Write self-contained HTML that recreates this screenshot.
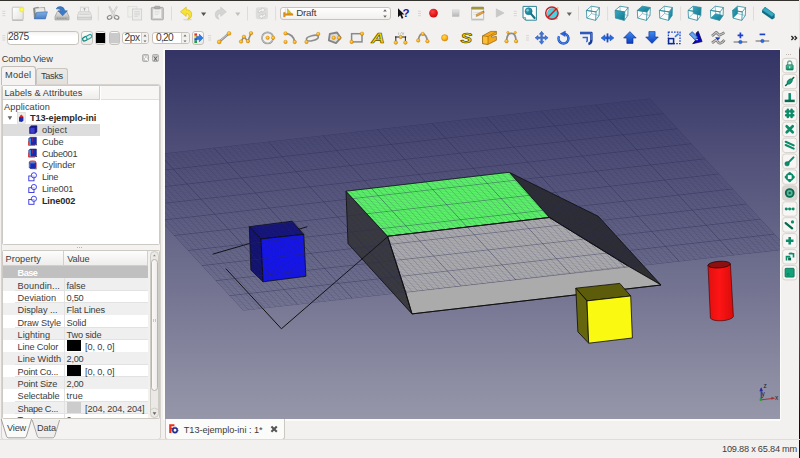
<!DOCTYPE html><html><head><meta charset="utf-8"><title>FreeCAD</title><style>

html,body{margin:0;padding:0}
body{width:800px;height:458px;overflow:hidden;background:#f2f1f0;font-family:"Liberation Sans",sans-serif}
#root{position:absolute;left:0;top:0;width:800px;height:458px;overflow:hidden;background:#f2f1f0}
#root div,#root i{position:absolute;box-sizing:border-box}
.topline{left:0;top:0;width:798.8px;height:1.1px;background:#33322e}
.t{position:absolute;white-space:pre;line-height:1;transform-origin:0 50%}
.tbtn{width:7.1px;height:7.5px;border:0.7px solid #b2b0ad;border-radius:1.8px;background:#c9c9c7}
.tab1{background:#f4f3f2;border:0.8px solid #c2beb7;border-bottom:none;border-radius:3px 3px 0 0}
.tab2{background:linear-gradient(#eceae7,#e3e0dc);border:0.8px solid #c9c5bf;border-bottom:none;border-radius:3px 3px 0 0}
.pane{border:0.8px solid #d6d3ce;border-radius:3px;background:#f4f3f2}
.wid{background:#fff;border:0.8px solid #cdc9c3;border-radius:1.5px}
.hdr{background:linear-gradient(#fdfdfd,#eeedeb);border-right:0.8px solid #d3d0cb;border-bottom:0.8px solid #d3d0cb}
.fld{border:0.8px solid #c6c2bc}
.btn{border:0.8px solid #c6c2bb;border-radius:3px;background:linear-gradient(#fbfbfa,#eceae7)}

</style></head><body><div id="root">
<div class="topline"></div>
<div style="position:absolute;left:798.8px;top:0;width:1.2px;height:458px;background:linear-gradient(#e4e4e4 0,#e4e4e4 46px,#34345e 50px,#4a4a5c 200px,#4c4c54 330px,#0c0c0c 430px,#0c0c0c 458px)"></div>
<div class="tbtn" style="left:141.8px;top:54.2px"><i style="left:0.9px;top:0.9px;width:1.6px;height:1.6px;background:#f4f4f4"></i><i style="left:2px;top:2.9px;width:1.8px;height:1.6px;background:#fafafa"></i><i style="left:3.9px;top:4px;width:1.7px;height:1.4px;background:#ededed"></i><i style="left:3.6px;top:1.2px;width:1.6px;height:1.2px;background:#dedede"></i></div>
<div class="tbtn" style="left:152.1px;top:54.2px"><svg width="7" height="7.4" style="position:absolute;left:-0.9px;top:-0.3px"><path d="M2 1.6L5 5.8M5 1.6L2 5.8" stroke="#555" stroke-width="0.9"/><path d="M1.3 2.4V5M5.7 2.4V5" stroke="#eee" stroke-width="0.7"/></svg></div>
<div class="tab2" style="left:36px;top:67.6px;width:31.5px;height:16.4px"></div>
<div class="pane" style="left:0.5px;top:83.6px;width:160.8px;height:356.2px"></div>
<div class="tab1" style="left:0.5px;top:66px;width:35.5px;height:18.6px"></div>
<div class="wid" style="left:2px;top:84.8px;width:157.5px;height:160.5px"></div>
<div class="hdr" style="left:3px;top:86.3px;width:96.5px;height:13.7px"></div>
<div style="position:absolute;left:100.5px;top:86.3px;width:58px;height:14px;background:#f7f6f5;border-bottom:1px solid #e2dfdb;box-sizing:border-box"></div>
<div style="position:absolute;left:3px;top:124.1px;width:96.5px;height:11.8px;background:#dddddd"></div>
<svg style="position:absolute;left:6px;top:114px" width="8" height="8"><path d="M1.6 2.2L6.2 2.2L3.9 6Z" fill="#666"/></svg>
<div style="position:absolute;left:77px;top:247px;width:6px;height:1px;background:repeating-linear-gradient(90deg,#b8b4ae 0 1px,transparent 1px 2px)"></div>
<div class="wid" style="left:2px;top:250px;width:157.5px;height:168.8px;background:#f2f1f0"></div>
<div style="position:absolute;left:3px;top:251px;width:145px;height:167px;background:#fff;overflow:hidden">
<div class="hdr" style="left:0;top:0;width:61px;height:15px"></div><div class="hdr" style="left:61px;top:0;width:84px;height:15px"></div>
<div style="position:absolute;left:0;top:15.2px;width:145px;height:12.2px;background:#c0c0c0"></div>
<div style="position:absolute;left:0;top:27.2px;width:145px;height:12.33px;background:#efefef"></div>
<div style="position:absolute;left:12px;top:38.8px;width:133px;height:0.9px;background:#e2e2e2"></div>
<div style="position:absolute;left:0;top:39.5px;width:145px;height:12.33px;background:#ffffff"></div>
<div style="position:absolute;left:12px;top:51.2px;width:133px;height:0.9px;background:#e2e2e2"></div>
<div style="position:absolute;left:0;top:51.9px;width:145px;height:12.33px;background:#efefef"></div>
<div style="position:absolute;left:12px;top:63.5px;width:133px;height:0.9px;background:#e2e2e2"></div>
<div style="position:absolute;left:0;top:64.2px;width:145px;height:12.33px;background:#ffffff"></div>
<div style="position:absolute;left:12px;top:75.8px;width:133px;height:0.9px;background:#e2e2e2"></div>
<div style="position:absolute;left:0;top:76.5px;width:145px;height:12.33px;background:#efefef"></div>
<div style="position:absolute;left:12px;top:88.1px;width:133px;height:0.9px;background:#e2e2e2"></div>
<div style="position:absolute;left:0;top:88.8px;width:145px;height:12.33px;background:#ffffff"></div>
<div style="position:absolute;left:12px;top:100.5px;width:133px;height:0.9px;background:#e2e2e2"></div>
<div style="position:absolute;left:63.5px;top:89.2px;width:14.5px;height:10.9px;background:#000"></div>
<div style="position:absolute;left:0;top:101.2px;width:145px;height:12.33px;background:#efefef"></div>
<div style="position:absolute;left:12px;top:112.8px;width:133px;height:0.9px;background:#e2e2e2"></div>
<div style="position:absolute;left:0;top:113.5px;width:145px;height:12.33px;background:#ffffff"></div>
<div style="position:absolute;left:12px;top:125.1px;width:133px;height:0.9px;background:#e2e2e2"></div>
<div style="position:absolute;left:63.5px;top:113.9px;width:14.5px;height:10.9px;background:#000"></div>
<div style="position:absolute;left:0;top:125.8px;width:145px;height:12.33px;background:#efefef"></div>
<div style="position:absolute;left:12px;top:137.5px;width:133px;height:0.9px;background:#e2e2e2"></div>
<div style="position:absolute;left:0;top:138.2px;width:145px;height:12.33px;background:#ffffff"></div>
<div style="position:absolute;left:12px;top:149.8px;width:133px;height:0.9px;background:#e2e2e2"></div>
<div style="position:absolute;left:0;top:150.5px;width:145px;height:12.33px;background:#efefef"></div>
<div style="position:absolute;left:12px;top:162.1px;width:133px;height:0.9px;background:#e2e2e2"></div>
<div style="position:absolute;left:63.5px;top:150.9px;width:14.5px;height:10.9px;background:#cccccc"></div>
<div style="position:absolute;left:0;top:162.8px;width:145px;height:12.33px;background:#ffffff"></div>
<div style="position:absolute;left:12px;top:174.5px;width:133px;height:0.9px;background:#e2e2e2"></div>
<div style="position:absolute;left:60.6px;top:27.2px;width:0.9px;height:140px;background:#e2e2e2"></div>
<span class="t" style="left:14.6px;top:165.3px;font-size:9.2px;color:#3c3c3c;letter-spacing:-0.2px">Tr...</span><span class="t" style="left:63.6px;top:165.3px;font-size:9.2px;color:#3c3c3c">0</span>
</div>
<div style="position:absolute;left:149.8px;top:250.8px;width:9px;height:167.6px;background:#ebe9e6;border:0.6px solid #cfcbc5;box-sizing:border-box;border-radius:4.5px"></div>
<div style="position:absolute;left:150.6px;top:258.6px;width:7.4px;height:132px;background:linear-gradient(90deg,#f9f9f8,#efedeb);border:0.8px solid #b9b5ae;box-sizing:border-box;border-radius:3.7px"></div>
<svg style="position:absolute;left:150px;top:251px" width="9" height="168"><path d="M3 5.2L4.4 3.4L5.8 5.2Z" fill="#8a8680"/><path d="M2.6 161.2L6.4 161.2L4.5 164Z" fill="#6a665f"/><path d="M1 158.5Q4.5 155.5 8 158.5" stroke="#c5c1bb" stroke-width="0.7" fill="none"/><rect x="3" y="68" width="0.8" height="3" fill="#bbb"/><rect x="5" y="68" width="0.8" height="3" fill="#bbb"/></svg>
<svg style="position:absolute;left:0;top:418px" width="165" height="23"><path d="M1.2 1L6.5 18.2Q7 19.8 8.6 19.8L24.2 19.8Q25.8 19.8 26.4 18.2L31.6 1" fill="#fafaf9" stroke="#7d7974" stroke-width="0.7"/><path d="M32.2 2L37.4 18.4Q38 19.8 39.6 19.8L52.4 19.8Q54 19.8 54.6 18.4L59.6 2" fill="#efeeec" stroke="#8a8680" stroke-width="0.7"/></svg>
<div style="position:absolute;left:163.4px;top:49px;width:618px;height:371.4px;background:#fbfbfa"></div>
<div style="position:absolute;left:164.6px;top:419.5px;width:615.6px;height:1px;background:#fbfbfa"></div>
<div style="position:absolute;left:164.6px;top:418.5px;width:120px;height:21px;background:#fbfbfa;border:0.8px solid #cbc7c1;border-top:none;box-sizing:border-box;border-radius:0 0 3px 3px"></div>
<svg style="position:absolute;left:168px;top:423px" width="12" height="12"><path d="M1.2 1.2L6.4 1.2L6.4 3.2L3.4 3.2L3.4 4.8L5.6 4.8L5.6 6.6L3.4 6.6L3.4 10L1.2 10Z" fill="#e8301c"/><circle cx="7" cy="7.2" r="2.2" fill="none" stroke="#1c2a8c" stroke-width="1.5"/><circle cx="7" cy="7.2" r="3.1" fill="none" stroke="#1c2a8c" stroke-width="0.8" stroke-dasharray="1.1 1"/></svg>
<svg style="position:absolute;left:269.5px;top:425.3px" width="9" height="9"><path d="M1.4 1.4L6.8 6.8M6.8 1.4L1.4 6.8" stroke="#555" stroke-width="2.1"/></svg>
<div style="position:absolute;left:0;top:439.4px;width:800px;height:0.8px;background:#e0ddd9"></div>
<div style="position:absolute;left:786px;top:53.5px;width:6px;height:1px;background:repeating-linear-gradient(90deg,#bbb7b1 0 1px,transparent 1px 2px)"></div>
<div class="fld" style="left:280.2px;top:6.5px;width:111px;height:13.4px;border-radius:3px;background:linear-gradient(#fff,#f1f0ee)"></div>
<div class="fld" style="left:7.2px;top:30.6px;width:72.3px;height:14.7px;border-radius:3.5px;background:linear-gradient(#f3f2f0,#fff 35%)"></div>
<div class="btn" style="left:81.4px;top:30.6px;width:11.2px;height:14.7px"></div>
<div class="btn" style="left:95px;top:30.6px;width:11.4px;height:14.7px"></div><div style="position:absolute;left:96.4px;top:33.2px;width:9px;height:9.4px;background:#000"></div>
<div class="btn" style="left:108.5px;top:30.6px;width:11.2px;height:14.7px"></div><div style="position:absolute;left:110px;top:33.2px;width:8.6px;height:9.4px;background:#cacaca"></div>
<div class="fld" style="left:122px;top:32.2px;width:26.8px;height:11.9px;border-radius:3px;background:#fff"></div><div style="position:absolute;left:141.3px;top:32.8px;width:7px;height:10.7px;background:#f2f1f0;border-left:0.7px solid #d4d0ca;border-radius:0 2.5px 2.5px 0"></div>
<div class="fld" style="left:152.3px;top:32.2px;width:37.7px;height:11.9px;border-radius:3px;background:#fff"></div><div style="position:absolute;left:180.8px;top:32.8px;width:8.6px;height:10.7px;background:#f2f1f0;border-left:0.7px solid #d4d0ca;border-radius:0 2.5px 2.5px 0"></div>
<svg style="position:absolute;left:120px;top:30px" width="75" height="16"><g fill="#6a665f"><path d="M23.5 6.4L25 4.6L26.5 6.4Z"/><path d="M23.5 10.4L25 12.2L26.5 10.4Z"/><path d="M63.5 6.4L65 4.6L66.5 6.4Z"/><path d="M63.5 10.4L65 12.2L66.5 10.4Z"/></g></svg>
<div class="btn" style="left:192.4px;top:30.8px;width:11.6px;height:14.4px"></div>
<svg id="scene" style="position:absolute;left:164.6px;top:50.2px" width="615.5" height="369.1" viewBox="164.6 50.2 615.5 369.1">
<defs>
<linearGradient id="bg" x1="0" y1="0" x2="0" y2="1"><stop offset="0" stop-color="#333365"/><stop offset="1" stop-color="#9797aa"/></linearGradient>
<linearGradient id="cyl" x1="0" y1="0" x2="1" y2="0"><stop offset="0" stop-color="#e01010"/><stop offset="0.45" stop-color="#ff1414"/><stop offset="1" stop-color="#d80c0c"/></linearGradient>
<clipPath id="gclip"><polygon points="104.4,160.3 649.4,98.7 788.0,249.4 243.0,311.0"/></clipPath>
</defs>
<rect x="164" y="50" width="617" height="370" fill="url(#bg)"/>
<path d="M212.2 254.4L307 226.9" stroke="#111" stroke-width="1" fill="none"/>
<g stroke="#0a0a0a" stroke-width="0.8" stroke-linejoin="round">
<polygon points="508.8,172.5 597.9,216.5 660.6,285.2 628.0,266.4 549.0,217.7" fill="#2e2e33"/>
<polygon points="345.6,191.4 387.2,236.5 405.3,292.8 411.6,314.1 347.6,243.8" fill="#3b3b3f"/>
<polygon points="345.6,191.4 508.8,172.5 549.0,217.7 387.2,236.5" fill="#5efc69"/>
<polygon points="387.2,236.5 549.0,217.7 628.0,266.4 405.3,292.8" fill="#b2b2b2" stroke="none"/>
<polygon points="405.3,292.8 628.0,266.4 660.6,285.2 411.6,314.1" fill="#ababab" stroke="none"/>
<path d="M387.2 236.5L549 217.7L628 266.4L660.6 285.2L411.6 314.1L405.3 292.8Z" fill="none"/>
<path d="M405.3 292.8L628 266.4" stroke="#777" stroke-opacity="0.5" stroke-width="0.5"/>
<path d="M387.2 236.5L549 217.7L628 266.4M387.2 236.5L405.3 292.8L411.6 314.1L660.6 285.2" fill="none"/>
<polygon points="248.9,226.9 291.7,221.4 303.4,234.6 260.6,239.1" fill="#14147c"/>
<polygon points="248.9,226.9 260.6,239.1 262.7,282.0 250.5,270.3" fill="#121272"/>
<polygon points="260.6,239.1 303.4,234.6 305.5,276.5 262.7,282.0" fill="#1414f4"/>
<polygon points="575.4,288.4 619.4,283.6 630.3,296.2 586.6,301.1" fill="#5c5c0a"/>
<polygon points="575.4,288.4 586.6,301.1 588.3,343.4 577.5,332.0" fill="#66660e"/>
<polygon points="586.6,301.1 630.3,296.2 632.0,338.2 588.3,343.4" fill="#f9f912"/>
</g>
<path d="M707.6 265.2L710 318.2A11.6 3.9 -4 0 0 733 316.8L730 264.3Z" fill="url(#cyl)" stroke="#300" stroke-width="0.6"/>
<ellipse cx="718.8" cy="264.8" rx="11.2" ry="3.3" transform="rotate(-4 718.8 264.8)" fill="#8c1010" stroke="#200" stroke-width="0.7"/>
<path d="M225.4 268.8L281 329L387.2 237" stroke="#111" stroke-width="1" fill="none"/>
<g clip-path="url(#gclip)">
<path d="M105.8 161.8L650.8 100.2M107.2 163.3L652.2 101.7M108.6 164.8L653.6 103.2M109.9 166.3L654.9 104.7M111.3 167.8L656.3 106.2M112.7 169.3L657.7 107.7M114.1 170.8L659.1 109.2M115.5 172.4L660.5 110.8M116.9 173.9L661.9 112.3M119.6 176.9L664.6 115.3M121.0 178.4L666.0 116.8M122.4 179.9L667.4 118.3M123.8 181.4L668.8 119.8M125.2 182.9L670.2 121.3M126.6 184.4L671.6 122.8M128.0 185.9L673.0 124.3M129.3 187.4L674.3 125.8M130.7 188.9L675.7 127.3M133.5 191.9L678.5 130.3M134.9 193.5L679.9 131.9M136.3 195.0L681.3 133.4M137.7 196.5L682.7 134.9M139.1 198.0L684.0 136.4M140.4 199.5L685.4 137.9M141.8 201.0L686.8 139.4M143.2 202.5L688.2 140.9M144.6 204.0L689.6 142.4M147.4 207.0L692.4 145.4M148.8 208.5L693.8 146.9M150.1 210.0L695.1 148.4M151.5 211.5L696.5 149.9M152.9 213.0L697.9 151.4M154.3 214.6L699.3 153.0M155.7 216.1L700.7 154.5M157.1 217.6L702.1 156.0M158.5 219.1L703.5 157.5M161.2 222.1L706.2 160.5M162.6 223.6L707.6 162.0M164.0 225.1L709.0 163.5M165.4 226.6L710.4 165.0M166.8 228.1L711.8 166.5M168.2 229.6L713.2 168.0M169.5 231.1L714.5 169.5M170.9 232.6L715.9 171.0M172.3 234.1L717.3 172.5M175.1 237.2L720.1 175.6M176.5 238.7L721.5 177.1M177.9 240.2L722.9 178.6M179.2 241.7L724.2 180.1M180.6 243.2L725.6 181.6M182.0 244.7L727.0 183.1M183.4 246.2L728.4 184.6M184.8 247.7L729.8 186.1M186.2 249.2L731.2 187.6M188.9 252.2L733.9 190.6M190.3 253.7L735.3 192.1M191.7 255.2L736.7 193.6M193.1 256.7L738.1 195.1M194.5 258.3L739.5 196.7M195.9 259.8L740.9 198.2M197.3 261.3L742.3 199.7M198.6 262.8L743.6 201.2M200.0 264.3L745.0 202.7M202.8 267.3L747.8 205.7M204.2 268.8L749.2 207.2M205.6 270.3L750.6 208.7M207.0 271.8L752.0 210.2M208.3 273.3L753.4 211.7M209.7 274.8L754.7 213.2M211.1 276.3L756.1 214.7M212.5 277.8L757.5 216.2M213.9 279.4L758.9 217.8M216.7 282.4L761.7 220.8M218.1 283.9L763.1 222.3M219.4 285.4L764.4 223.8M220.8 286.9L765.8 225.3M222.2 288.4L767.2 226.8M223.6 289.9L768.6 228.3M225.0 291.4L770.0 229.8M226.4 292.9L771.4 231.3M227.8 294.4L772.8 232.8M230.5 297.4L775.5 235.8M231.9 298.9L776.9 237.3M233.3 300.5L778.3 238.9M234.7 302.0L779.7 240.4M236.1 303.5L781.1 241.9M237.5 305.0L782.5 243.4M238.8 306.5L783.8 244.9M240.2 308.0L785.2 246.4M241.6 309.5L786.6 247.9" stroke="#2e2e5a" stroke-opacity="0.24" stroke-width="0.6" fill="none"/>
<path d="M109.9 159.7L248.4 310.4M115.3 159.1L253.9 309.8M120.8 158.5L259.4 309.2M126.2 157.8L264.8 308.5M131.7 157.2L270.2 307.9M137.1 156.6L275.7 307.3M142.6 156.0L281.1 306.7M148.0 155.4L286.6 306.1M153.4 154.8L292.1 305.5M164.4 153.5L302.9 304.2M169.8 152.9L308.4 303.6M175.2 152.3L313.9 303.0M180.7 151.7L319.3 302.4M186.2 151.1L324.8 301.8M191.6 150.4L330.2 301.1M197.1 149.8L335.6 300.5M202.5 149.2L341.1 299.9M207.9 148.6L346.6 299.3M218.9 147.4L357.4 298.1M224.3 146.7L362.9 297.4M229.8 146.1L368.4 296.8M235.2 145.5L373.8 296.2M240.7 144.9L379.2 295.6M246.1 144.3L384.7 295.0M251.6 143.7L390.1 294.4M257.0 143.1L395.6 293.8M262.4 142.4L401.0 293.1M273.4 141.2L411.9 291.9M278.8 140.6L417.4 291.3M284.2 140.0L422.9 290.7M289.7 139.4L428.3 290.1M295.1 138.7L433.8 289.4M300.6 138.1L439.2 288.8M306.1 137.5L444.6 288.2M311.5 136.9L450.1 287.6M317.0 136.3L455.6 287.0M327.9 135.0L466.4 285.7M333.3 134.4L471.9 285.1M338.8 133.8L477.4 284.5M344.2 133.2L482.8 283.9M349.6 132.6L488.2 283.3M355.1 132.0L493.7 282.7M360.5 131.3L499.1 282.0M366.0 130.7L504.6 281.4M371.5 130.1L510.1 280.8M382.4 128.9L521.0 279.6M387.8 128.3L526.4 279.0M393.2 127.7L531.9 278.4M398.7 127.0L537.3 277.7M404.1 126.4L542.8 277.1M409.6 125.8L548.2 276.5M415.0 125.2L553.6 275.9M420.5 124.6L559.1 275.3M426.0 124.0L564.5 274.7M436.9 122.7L575.5 273.4M442.3 122.1L580.9 272.8M447.8 121.5L586.4 272.2M453.2 120.9L591.8 271.6M458.6 120.3L597.2 271.0M464.1 119.6L602.7 270.3M469.6 119.0L608.2 269.7M475.0 118.4L613.6 269.1M480.4 117.8L619.0 268.5M491.4 116.6L630.0 267.3M496.8 115.9L635.4 266.6M502.2 115.3L640.8 266.0M507.7 114.7L646.3 265.4M513.1 114.1L651.8 264.8M518.6 113.5L657.2 264.2M524.1 112.9L662.7 263.6M529.5 112.3L668.1 263.0M535.0 111.6L673.5 262.3M545.9 110.4L684.5 261.1M551.3 109.8L689.9 260.5M556.8 109.2L695.3 259.9M562.2 108.6L700.8 259.3M567.6 107.9L706.2 258.6M573.1 107.3L711.7 258.0M578.5 106.7L717.1 257.4M584.0 106.1L722.6 256.8M589.5 105.5L728.0 256.2M600.4 104.2L739.0 254.9M605.8 103.6L744.4 254.3M611.2 103.0L749.9 253.7M616.7 102.4L755.3 253.1M622.1 101.8L760.8 252.5M627.6 101.2L766.2 251.9M633.0 100.5L771.6 251.2M638.5 99.9L777.1 250.6M643.9 99.3L782.5 250.0" stroke="#2e2e5a" stroke-opacity="0.30" stroke-width="0.7" fill="none"/>
<path d="M104.4 160.3L243.0 311.0M104.4 160.3L649.4 98.7M158.9 154.1L297.5 304.8M118.3 175.4L663.3 113.8M213.4 148.0L352.0 298.7M132.1 190.4L677.1 128.8M267.9 141.8L406.5 292.5M146.0 205.5L691.0 143.9M322.4 135.7L461.0 286.4M159.8 220.6L704.8 159.0M376.9 129.5L515.5 280.2M173.7 235.7L718.7 174.1M431.4 123.3L570.0 274.0M187.6 250.7L732.6 189.1M485.9 117.2L624.5 267.9M201.4 265.8L746.4 204.2M540.4 111.0L679.0 261.7M215.3 280.9L760.3 219.3M594.9 104.9L733.5 255.6M229.1 295.9L774.1 234.3M649.4 98.7L788.0 249.4M243.0 311.0L788.0 249.4" stroke="#2a2a55" stroke-opacity="0.46" stroke-width="1" fill="none"/>
</g>
<g fill="none" stroke-width="1">
<path d="M760.8 400L760.8 388.5" stroke="#2a2aa0"/><path d="M759 391.5L760.8 387.5L762.6 391.5Z" fill="#2a2aa0" stroke="none"/>
<path d="M760.8 400L773 398.6" stroke="#a83030"/><path d="M771 397L775 398.4L771.2 400Z" fill="#a83030" stroke="none"/>
<rect x="759.3" y="398.6" width="2.4" height="2.4" fill="#20a020" stroke="none"/>
</g>
<g font-family="Liberation Sans, sans-serif" font-size="6.5" fill="#222">
<text x="763" y="388.5">z</text><text x="761.2" y="396.5">y</text><text x="774.5" y="399.8">x</text>
</g>
</svg>
<svg id="tb" style="position:absolute;left:0;top:0" width="800" height="50" viewBox="0 0 800 50">
<defs>
<radialGradient id="od" cx="0.4" cy="0.35" r="0.7"><stop offset="0" stop-color="#ffd95a"/><stop offset="0.6" stop-color="#fbb116"/><stop offset="1" stop-color="#d98600"/></radialGradient>
<radialGradient id="rec" cx="0.4" cy="0.35" r="0.7"><stop offset="0" stop-color="#f44"/><stop offset="0.7" stop-color="#e01414"/><stop offset="1" stop-color="#c40c0c"/></radialGradient>
<radialGradient id="yel" cx="0.5" cy="0.5" r="0.5"><stop offset="0" stop-color="#ffffb0"/><stop offset="0.6" stop-color="#f3ef3a"/><stop offset="1" stop-color="#f3ef3a" stop-opacity="0.5"/></radialGradient>
<linearGradient id="teal" x1="0" y1="0" x2="1" y2="1"><stop offset="0" stop-color="#3aaac2"/><stop offset="1" stop-color="#0c7890"/></linearGradient>
<linearGradient id="paper" x1="0" y1="0" x2="1" y2="1"><stop offset="0" stop-color="#ffffff"/><stop offset="1" stop-color="#e2e2e0"/></linearGradient>
<linearGradient id="blu" x1="0" y1="0" x2="0" y2="1"><stop offset="0" stop-color="#3f8cf0"/><stop offset="1" stop-color="#0a3ec0"/></linearGradient>
<linearGradient id="gry" x1="0" y1="0" x2="0" y2="1"><stop offset="0" stop-color="#e4e4e4"/><stop offset="1" stop-color="#b4b4b4"/></linearGradient>
<linearGradient id="fold" x1="0" y1="0" x2="0" y2="1"><stop offset="0" stop-color="#7fb0e6"/><stop offset="1" stop-color="#4a7fc4"/></linearGradient>
<linearGradient id="ora" x1="0" y1="0" x2="1" y2="0"><stop offset="0" stop-color="#ffc43a"/><stop offset="1" stop-color="#f59a00"/></linearGradient>
</defs>
<path d="M2.3 11.3h3M2.3 13.5h3M2.3 15.7h3" stroke="#d2cfca" stroke-width="0.8"/>
<path d="M12.2 20.2h11" stroke="#b5b5b2" stroke-width="1.2"/>
<rect x="12.3" y="7.2" width="10.9" height="12.6" rx="0.6" fill="url(#paper)" stroke="#b9b9b6" stroke-width="0.8"/>
<circle cx="21.7" cy="9.6" r="2.9" fill="url(#yel)"/>
<path d="M33.6 8.2L38 7.2L39.2 8.2L44.6 7.6L45.4 17.6L34.4 18.6Z" fill="#8f8f8d" stroke="#6e6e6c" stroke-width="0.6"/>
<path d="M35 8.4L44.2 7.4L45 12L35.6 13Z" fill="#e9e9e7" stroke="#a5a5a2" stroke-width="0.4"/>
<path d="M36.6 12.4L47.4 11.8L45.4 18.9L34.4 18.9Z" fill="url(#fold)" stroke="#3f6fae" stroke-width="0.6"/>
<path d="M57.4 11.4L66.6 11.4L69 16.6L69 19.9L55 19.9L55 16.6Z" fill="url(#gry)" stroke="#9a9a98" stroke-width="0.7"/>
<path d="M55.4 16.8H68.6V19.6H55.4Z" fill="#b4b4b2"/><path d="M57 18.4H67" stroke="#8a8a88" stroke-width="0.8" stroke-dasharray="0.9 0.7"/>
<path d="M56.2 9Q57 6.4 60.4 6.6Q64.2 6.8 64.8 10.8L67.4 10.8L62.6 15.8L58 10.8L60.6 10.8Q60.2 8.2 56.2 9Z" fill="#3d7ac6" stroke="#2a5ca4" stroke-width="0.5"/>
<path d="M80.4 7.2H88.6V12.4H80.4Z" fill="#f2f2f0" stroke="#c9c9c7" stroke-width="0.7"/>
<path d="M84.5 8.2V10.8M83.2 9.4L84.5 8L85.8 9.4" stroke="#a8a8a6" stroke-width="0.8" fill="none"/>
<path d="M79 11.8H90L91.4 15.2V18.4H77.6V15.2Z" fill="#e9e9e7" stroke="#c4c4c2" stroke-width="0.7"/>
<path d="M77.6 17.2H91.4V19.8H77.6Z" fill="#dadad8" stroke="#c0c0be" stroke-width="0.6"/>
<path d="M79.4 14.2H89.6" stroke="#bdbdbb" stroke-width="0.7"/>
<path d="M98.3 6.5V20.5" stroke="#dcd9d5" stroke-width="0.9"/>
<g fill="none" stroke="#8c8c8a" stroke-width="1.2"><ellipse cx="109.6" cy="17.4" rx="2.3" ry="1.8" transform="rotate(-25 109.6 17.4)"/><ellipse cx="116.6" cy="17.4" rx="2.3" ry="1.8" transform="rotate(25 116.6 17.4)"/></g>
<path d="M108.8 6.8L110 6.6L115.2 16L113.6 16.4Z" fill="#e6e6e4" stroke="#b8b8b6" stroke-width="0.6"/><path d="M117.4 6.8L116.2 6.6L111 16L112.6 16.4Z" fill="#f2f2f0" stroke="#b8b8b6" stroke-width="0.6"/>
<rect x="127.9" y="6.4" width="9" height="10.6" fill="#efefed" stroke="#d9d9d6" stroke-width="0.7"/>
<rect x="132.4" y="9" width="9.3" height="11" fill="#ececea" stroke="#c9c9c6" stroke-width="0.7"/>
<path d="M134.4 11.6h5.4M134.4 13.2h5.4M134.4 14.8h5.4M134.4 16.4h3.4" stroke="#d0d0ce" stroke-width="0.7"/>
<rect x="151.3" y="7.4" width="12" height="12.4" rx="0.8" fill="#c9c9c7" stroke="#9f9f9d" stroke-width="0.8"/>
<rect x="152.9" y="9" width="8.8" height="9.6" fill="#f1f1ef" stroke="#bbb" stroke-width="0.4"/>
<rect x="154.6" y="6.2" width="5.4" height="2.6" rx="0.8" fill="#adadab" stroke="#8c8c8a" stroke-width="0.5"/>
<path d="M154.6 11.4h5M154.6 13h5M154.6 14.6h3.6" stroke="#d4d4d2" stroke-width="0.6"/>
<path d="M171.5 6.5V20.5" stroke="#dcd9d5" stroke-width="0.9"/>
<ellipse cx="187.5" cy="19.6" rx="4.5" ry="0.9" fill="#000" fill-opacity="0.10"/>
<path d="M180.5 11.8L186.2 7L186.2 9.7Q191.9 9.8 191.7 15Q191.5 18.7 187.8 19.3Q189.8 16.6 188.8 14.9Q188 13.7 186.2 13.7L186.2 16.4Z" fill="#f7e23a" stroke="#d9b400" stroke-width="0.6" stroke-linejoin="round"/>
<path d="M201.0 12.6L206.2 12.6L203.6 16.0Z" fill="#55524d"/>
<g transform="translate(406.9 0) scale(-1 1)"><path d="M180.5 11.8L186.2 7L186.2 9.7Q191.9 9.8 191.7 15Q191.5 18.7 187.8 19.3Q189.8 16.6 188.8 14.9Q188 13.7 186.2 13.7L186.2 16.4Z" fill="#d4d4d2" stroke="#c4c4c2" stroke-width="0.5" stroke-linejoin="round"/></g>
<path d="M235.20000000000002 12.6L240.4 12.6L237.8 16.0Z" fill="#c2bfba"/>
<path d="M247.5 6.5V20.5" stroke="#dcd9d5" stroke-width="0.9"/>
<rect x="255.8" y="7.2" width="12.2" height="12" rx="2.6" fill="#dddddb"/>
<path d="M258 12.4Q258.4 9 262 9L262 7.6L265.2 10L262 12.4L262 11Q260.2 11 260 12.6Z" fill="#f4f4f2" stroke="#b9b9b7" stroke-width="0.5"/>
<path d="M266 14Q265.6 17.4 262 17.4L262 18.8L258.8 16.4L262 14L262 15.4Q263.8 15.4 264 13.8Z" fill="#f4f4f2" stroke="#b9b9b7" stroke-width="0.5"/>
<path d="M275.6 6.5V20.5" stroke="#dcd9d5" stroke-width="0.9"/>
<path d="M284 15.4H293V17.2H284Z" fill="#ffffff" fill-opacity="0.9"/>
<path d="M285.3 8.4V13.4" stroke="#c8c8c8" stroke-width="0.6"/>
<path d="M287.4 8.6L287.4 13.8L291.9 13.8Z" fill="#d2c432" stroke="#a89a1a" stroke-width="0.4"/>
<path d="M283.6 12.6L285.2 12.6L285.2 13.8L292.8 13.8L292.8 15.3L285.2 15.3L285.2 16.8L283.6 16.8Z" fill="#e8961a" stroke="#a86400" stroke-width="0.4"/>
<path d="M383.2 11.4L385 9.2L386.8 11.4Z" fill="#6a665f"/><path d="M383.2 15.6L385 17.8L386.8 15.6Z" fill="#6a665f"/>
<path d="M398 8.2L398 17.2L400.2 15.2L401.8 18.8L403.4 18L401.8 14.6L404.4 14.4Z" fill="#111"/>
<text x="402.6" y="17" font-family="Liberation Sans, sans-serif" font-weight="bold" font-size="11.5" fill="#1a1a9a">?</text>
<path d="M418.0 11.3h3M418.0 13.5h3M418.0 15.7h3" stroke="#d2cfca" stroke-width="0.8"/>
<circle cx="433.5" cy="13.1" r="4.4" fill="url(#rec)"/>
<rect x="452.2" y="9.9" width="6.9" height="6.7" fill="url(#gry)" stroke="#c4c4c2" stroke-width="0.4"/>
<path d="M471.2 19.9H484.2" stroke="#b5b5b2" stroke-width="0.9"/>
<rect x="471.6" y="7.4" width="12" height="11.8" rx="0.7" fill="#f4f4f2" stroke="#a9a9a6" stroke-width="0.7"/>
<rect x="471.6" y="7" width="12" height="2.2" rx="0.6" fill="#a89a3c" stroke="#857a28" stroke-width="0.4"/>
<path d="M473.4 12.4h6M473.4 14.4h4" stroke="#cfcfcc" stroke-width="0.6"/>
<path d="M476 16.4L476.6 14.2L482.6 11.2L483.8 12.8L477.9 16Z" fill="#e8a03a" stroke="#9a6414" stroke-width="0.4"/><path d="M482.6 11.2L483.6 10.8L484.6 12.2L483.8 12.8Z" fill="#e04a4a"/>
<path d="M496.2 8.8L504.2 13L496.2 17.2Z" fill="#c9c9c7" stroke="#bdbdbb" stroke-width="0.4"/>
<path d="M513.8 11.3h3M513.8 13.5h3M513.8 15.7h3" stroke="#d2cfca" stroke-width="0.8"/>
<path d="M523 6.4H536.4V20.2H525.6L523 17.6Z" fill="#fdfdfd" stroke="#2f8496" stroke-width="1"/>
<path d="M523 17.6L525.6 17.6L525.6 20.2" fill="none" stroke="#2f8496" stroke-width="0.7"/>
<path d="M530.6 13.4L534.6 18" stroke="#1c7186" stroke-width="2.2" stroke-linecap="round"/>
<circle cx="528.6" cy="11.2" r="3.5" fill="url(#teal)" stroke="#0f6a80" stroke-width="0.6"/><circle cx="527.6" cy="10.2" r="1.2" fill="#9fdbe6" fill-opacity="0.8"/>
<ellipse cx="553.6" cy="18.6" rx="4.4" ry="1.2" fill="#000" fill-opacity="0.25"/>
<circle cx="552.4" cy="13.6" r="5" fill="#4fd0dc" stroke="#1e9aae" stroke-width="0.5"/>
<path d="M549.6 14.8L558.4 7.4" stroke="#e8c820" stroke-width="1.4"/>
<circle cx="551.9" cy="13.1" r="6.2" fill="none" stroke="#c8202a" stroke-width="1.5"/>
<path d="M547.6 17.6L556.4 8.8" stroke="#c8202a" stroke-width="1.5"/>
<path d="M566.6999999999999 12.6L571.9 12.6L569.3 16.0Z" fill="#6a665f"/>
<path d="M578.5 6.5V20.5" stroke="#dcd9d5" stroke-width="0.9"/>
<path d="M586.4 10.4L591.3 6.2L599.4 7.5L599.1 15.5L595.6 20.4L586.8 18.1Z" fill="#ffffff" fill-opacity="0.8"/>
<path d="M591.5 13.6L591.3 6.2M591.5 13.6L599.1 15.5M591.5 13.6L586.8 18.1" fill="none" stroke="#5aa2b2" stroke-width="0.6"/>
<path d="M586.4 10.4L596.1 11.9L595.6 20.4L586.8 18.1ZM586.4 10.4L591.3 6.2L599.4 7.5L596.1 11.9ZM599.4 7.5L599.1 15.5L595.6 20.4" fill="none" stroke="#2f8a9c" stroke-width="0.8" stroke-linejoin="round"/>
<path d="M607.6 6.5V20.5" stroke="#dcd9d5" stroke-width="0.9"/>
<path d="M615.1 10.4L620.0 6.2L628.1 7.5L627.8 15.5L624.3 20.4L615.5 18.1Z" fill="#ffffff" fill-opacity="0.8"/>
<path d="M620.2 13.6L620.0 6.2M620.2 13.6L627.8 15.5M620.2 13.6L615.5 18.1" fill="none" stroke="#5aa2b2" stroke-width="0.6"/>
<path d="M615.1 10.4L624.8 11.9L624.3 20.4L615.5 18.1Z" fill="url(#teal)"/>
<path d="M615.1 10.4L624.8 11.9L624.3 20.4L615.5 18.1ZM615.1 10.4L620.0 6.2L628.1 7.5L624.8 11.9ZM628.1 7.5L627.8 15.5L624.3 20.4" fill="none" stroke="#2f8a9c" stroke-width="0.8" stroke-linejoin="round"/>
<path d="M637.3 10.4L642.2 6.2L650.3 7.5L650.0 15.5L646.5 20.4L637.7 18.1Z" fill="#ffffff" fill-opacity="0.8"/>
<path d="M642.4 13.6L642.2 6.2M642.4 13.6L650.0 15.5M642.4 13.6L637.7 18.1" fill="none" stroke="#5aa2b2" stroke-width="0.6"/>
<path d="M637.3 10.4L642.2 6.2L650.3 7.5L647.0 11.9Z" fill="url(#teal)"/>
<path d="M637.3 10.4L647.0 11.9L646.5 20.4L637.7 18.1ZM637.3 10.4L642.2 6.2L650.3 7.5L647.0 11.9ZM650.3 7.5L650.0 15.5L646.5 20.4" fill="none" stroke="#2f8a9c" stroke-width="0.8" stroke-linejoin="round"/>
<path d="M659.4 10.4L664.3 6.2L672.4 7.5L672.1 15.5L668.6 20.4L659.8 18.1Z" fill="#ffffff" fill-opacity="0.8"/>
<path d="M664.5 13.6L664.3 6.2M664.5 13.6L672.1 15.5M664.5 13.6L659.8 18.1" fill="none" stroke="#5aa2b2" stroke-width="0.6"/>
<path d="M669.1 11.9L672.4 7.5L672.1 15.5L668.6 20.4Z" fill="url(#teal)"/>
<path d="M659.4 10.4L669.1 11.9L668.6 20.4L659.8 18.1ZM659.4 10.4L664.3 6.2L672.4 7.5L669.1 11.9ZM672.4 7.5L672.1 15.5L668.6 20.4" fill="none" stroke="#2f8a9c" stroke-width="0.8" stroke-linejoin="round"/>
<path d="M680.6 6.5V20.5" stroke="#dcd9d5" stroke-width="0.9"/>
<path d="M688.1 10.4L693.0 6.2L701.1 7.5L700.8 15.5L697.3 20.4L688.5 18.1Z" fill="#ffffff" fill-opacity="0.8"/>
<path d="M693.2 13.6L693.0 6.2M693.2 13.6L700.8 15.5M693.2 13.6L688.5 18.1" fill="none" stroke="#5aa2b2" stroke-width="0.6"/>
<path d="M693.0 6.2L701.1 7.5L700.8 15.5L693.2 13.6Z" fill="url(#teal)"/>
<path d="M688.1 10.4L697.8 11.9L697.3 20.4L688.5 18.1ZM688.1 10.4L693.0 6.2L701.1 7.5L697.8 11.9ZM701.1 7.5L700.8 15.5L697.3 20.4" fill="none" stroke="#2f8a9c" stroke-width="0.8" stroke-linejoin="round"/>
<path d="M710.4 10.4L715.3 6.2L723.4 7.5L723.1 15.5L719.6 20.4L710.8 18.1Z" fill="#ffffff" fill-opacity="0.8"/>
<path d="M715.5 13.6L715.3 6.2M715.5 13.6L723.1 15.5M715.5 13.6L710.8 18.1" fill="none" stroke="#5aa2b2" stroke-width="0.6"/>
<path d="M710.8 18.1L719.6 20.4L723.1 15.5L715.5 13.6Z" fill="url(#teal)"/>
<path d="M710.4 10.4L720.1 11.9L719.6 20.4L710.8 18.1ZM710.4 10.4L715.3 6.2L723.4 7.5L720.1 11.9ZM723.4 7.5L723.1 15.5L719.6 20.4" fill="none" stroke="#2f8a9c" stroke-width="0.8" stroke-linejoin="round"/>
<path d="M732.6 10.4L737.5 6.2L745.6 7.5L745.3 15.5L741.8 20.4L733.0 18.1Z" fill="#ffffff" fill-opacity="0.8"/>
<path d="M737.7 13.6L737.5 6.2M737.7 13.6L745.3 15.5M737.7 13.6L733.0 18.1" fill="none" stroke="#5aa2b2" stroke-width="0.6"/>
<path d="M732.6 10.4L737.5 6.2L737.7 13.6L733.0 18.1Z" fill="url(#teal)"/>
<path d="M732.6 10.4L742.3 11.9L741.8 20.4L733.0 18.1ZM732.6 10.4L737.5 6.2L745.6 7.5L742.3 11.9ZM745.6 7.5L745.3 15.5L741.8 20.4" fill="none" stroke="#2f8a9c" stroke-width="0.8" stroke-linejoin="round"/>
<path d="M753.5 6.5V20.5" stroke="#dcd9d5" stroke-width="0.9"/>
<path d="M762 10.4L765 7L774.6 14L774.6 18L772 19.4L762 12.4Z" fill="#0e6d84"/>
<path d="M762.4 10.2L765 7.2L774.4 14L772 16.8Z" fill="#3aa9c0" stroke="#1a7f96" stroke-width="0.4"/>
<path d="M2.3 35.599999999999994h3M2.3 37.8h3M2.3 40.0h3" stroke="#d2cfca" stroke-width="0.8"/>
<g transform="translate(87 38) rotate(-28)"><rect x="-4.6" y="-2" width="5.4" height="3.6" rx="1.7" fill="none" stroke="#1a8a84" stroke-width="1.3"/><rect x="-0.4" y="-1.9" width="5.6" height="3.6" rx="1.7" fill="#d8f0ee" stroke="#2aa09a" stroke-width="1.1"/></g>
<rect x="194.4" y="33.4" width="2.6" height="2.4" fill="#e03030"/><rect x="194.4" y="35.8" width="2.6" height="2.4" fill="#f0d020"/><rect x="194.4" y="38.2" width="2.6" height="2.4" fill="#2050d0"/><rect x="194.4" y="40.6" width="2.6" height="2.4" fill="#20a030"/>
<path d="M196.6 36.4H199.4V34.2L203 38L199.4 41.8V39.6H196.6Z" fill="#2a7ae8" stroke="#1450b0" stroke-width="0.5"/>
<path d="M208.1 35.599999999999994h3M208.1 37.8h3M208.1 40.0h3" stroke="#d2cfca" stroke-width="0.8"/>
<path d="M219.2 41.9L229 33.4" stroke="#8e8e8e" stroke-width="2.2" stroke-linecap="round"/><path d="M219.2 41.6L229 33.1" stroke="#d8d8d8" stroke-width="0.8"/>
<circle cx="219.2" cy="41.9" r="1.95" fill="url(#od)" stroke="#c07a00" stroke-width="0.4"/>
<circle cx="229" cy="33.4" r="1.95" fill="url(#od)" stroke="#c07a00" stroke-width="0.4"/>
<path d="M241 41.6L243.9 36.8L247.9 41.2L251 33.2" stroke="#8e8e8e" stroke-width="1.6" fill="none" stroke-linejoin="round"/>
<circle cx="241" cy="41.6" r="1.75" fill="url(#od)" stroke="#c07a00" stroke-width="0.4"/>
<circle cx="243.9" cy="36.8" r="1.75" fill="url(#od)" stroke="#c07a00" stroke-width="0.4"/>
<circle cx="247.9" cy="41.2" r="1.75" fill="url(#od)" stroke="#c07a00" stroke-width="0.4"/>
<circle cx="251" cy="33.2" r="1.75" fill="url(#od)" stroke="#c07a00" stroke-width="0.4"/>
<circle cx="267.6" cy="37.9" r="5.6" fill="none" stroke="#909090" stroke-width="1.7"/><circle cx="267.6" cy="37.7" r="5.6" fill="none" stroke="#dcdcdc" stroke-width="0.6"/>
<circle cx="267.6" cy="37.8" r="1.75" fill="url(#od)" stroke="#c07a00" stroke-width="0.4"/>
<circle cx="273.1" cy="37.8" r="1.75" fill="url(#od)" stroke="#c07a00" stroke-width="0.4"/>
<path d="M285.5 33.4Q293.6 34.4 294.7 41.9" stroke="#8e8e8e" stroke-width="1.8" fill="none"/>
<circle cx="285.5" cy="33.4" r="1.75" fill="url(#od)" stroke="#c07a00" stroke-width="0.4"/>
<circle cx="285.5" cy="41.9" r="1.75" fill="url(#od)" stroke="#c07a00" stroke-width="0.4"/>
<circle cx="294.7" cy="41.9" r="1.75" fill="url(#od)" stroke="#c07a00" stroke-width="0.4"/>
<ellipse cx="312.4" cy="38.1" rx="6.1" ry="2.5" transform="rotate(-14 312.4 38.1)" fill="none" stroke="#8e8e8e" stroke-width="1.6"/>
<circle cx="306.5" cy="41.9" r="1.75" fill="url(#od)" stroke="#c07a00" stroke-width="0.4"/>
<circle cx="318.2" cy="34" r="1.75" fill="url(#od)" stroke="#c07a00" stroke-width="0.4"/>
<path d="M329.8 33.8L337 32.5L340.7 37.8L336 43.1L328.8 40.4Z" fill="#dcdcdc" stroke="#858585" stroke-width="1.8" stroke-linejoin="round"/>
<circle cx="333.7" cy="37.8" r="1.75" fill="url(#od)" stroke="#c07a00" stroke-width="0.4"/>
<circle cx="339" cy="37.8" r="1.75" fill="url(#od)" stroke="#c07a00" stroke-width="0.4"/>
<rect x="351.6" y="33.7" width="10.4" height="8.2" fill="#f0f0f0" stroke="#8a8a8a" stroke-width="1.5"/>
<circle cx="351.6" cy="41.9" r="1.75" fill="url(#od)" stroke="#c07a00" stroke-width="0.4"/>
<circle cx="362" cy="33.7" r="1.75" fill="url(#od)" stroke="#c07a00" stroke-width="0.4"/>
<text x="371.2" y="43.4" font-family="Liberation Sans, sans-serif" font-weight="bold" font-style="italic" font-size="15.4" fill="#f4d800" stroke="#5a4c00" stroke-width="0.6" textLength="13.6" lengthAdjust="spacingAndGlyphs">A</text>
<path d="M395.8 42.6V36.4M405.4 42.6V36.4M395 37H406.2" stroke="#111" stroke-width="0.9" fill="none"/>
<path d="M398.6 32.4v2.4M400.2 34.6l1.4-2.4M402.2 32.4l0.8 2.4l0.8-2.4" stroke="#9a9a9a" stroke-width="0.5" fill="none"/>
<circle cx="395.8" cy="42.6" r="1.8" fill="url(#od)" stroke="#c07a00" stroke-width="0.4"/>
<circle cx="400.7" cy="37" r="1.7" fill="url(#od)" stroke="#c07a00" stroke-width="0.4"/>
<circle cx="405.4" cy="42.6" r="1.8" fill="url(#od)" stroke="#c07a00" stroke-width="0.4"/>
<path d="M418.2 40.5Q419.4 33.6 422.7 33.9Q426.4 34.2 427.4 41.2" stroke="#8e8e8e" stroke-width="1.7" fill="none"/>
<circle cx="418.2" cy="40.5" r="1.75" fill="url(#od)" stroke="#c07a00" stroke-width="0.4"/>
<circle cx="422.7" cy="33.9" r="1.75" fill="url(#od)" stroke="#c07a00" stroke-width="0.4"/>
<circle cx="427.4" cy="41.2" r="1.75" fill="url(#od)" stroke="#c07a00" stroke-width="0.4"/>
<circle cx="444.7" cy="37.8" r="3.2" fill="url(#od)" stroke="#c07a00" stroke-width="0.4"/>
<text x="460.4" y="43.2" font-family="Liberation Sans, sans-serif" font-weight="bold" font-style="italic" font-size="14.6" fill="#ecd000" stroke="#4a3e00" stroke-width="0.6" textLength="11.6" lengthAdjust="spacingAndGlyphs">S</text>
<path d="M482.6 35.8L490.6 31.4L496.4 31.4L496.4 34.4L491.6 35.8L491.6 37.2L496.4 36.4L496.4 40.2L488 44.4L482.6 43.6Z" fill="#f5a81c" stroke="#7a5200" stroke-width="0.6" stroke-linejoin="round"/>
<path d="M482.6 35.8L488 36.6L488 44.4L482.6 43.6Z" fill="#ffbe38" stroke="#7a5200" stroke-width="0.5"/>
<path d="M488 36.6L496.4 31.6" stroke="#7a5200" stroke-width="0.4"/>
<path d="M506.5 41.2Q506.8 33.2 511.3 33.4Q515.8 33.2 516.1 41.2" stroke="#8e8e8e" stroke-width="1.8" fill="none"/>
<circle cx="507.9" cy="32.6" r="1.2" fill="url(#od)" stroke="#c07a00" stroke-width="0.4"/>
<circle cx="515.2" cy="32.6" r="1.2" fill="url(#od)" stroke="#c07a00" stroke-width="0.4"/>
<circle cx="506.5" cy="41.2" r="1.75" fill="url(#od)" stroke="#c07a00" stroke-width="0.4"/>
<circle cx="516.1" cy="41.2" r="1.75" fill="url(#od)" stroke="#c07a00" stroke-width="0.4"/>
<path d="M526.0 35.599999999999994h3M526.0 37.8h3M526.0 40.0h3" stroke="#d2cfca" stroke-width="0.8"/>
<path d="M541.6 31.3L543.9 34.2H542.4V37H545.2V35.5L548.1 37.8L545.2 40.1V38.6H542.4V41.4H543.9L541.6 44.3L539.3 41.4H540.8V38.6H538V40.1L535.1 37.8L538 35.5V37H540.8V34.2H539.3Z" fill="#3a78e0" stroke="#1c4cb0" stroke-width="0.5" stroke-linejoin="round"/>
<path d="M559 36.2A5 5 0 1 0 564.4 33.6" fill="none" stroke="#1c50c0" stroke-width="2.4"/><path d="M559 36.2A5 5 0 1 0 564.4 33.6" fill="none" stroke="#4a8af0" stroke-width="1"/>
<path d="M560.2 33.8L565.4 31L565.2 36.6Z" fill="#2a62d8" stroke="#1440a8" stroke-width="0.4"/>
<path d="M580 33H591.4V40Q591.4 43.4 588.4 44" fill="none" stroke="#163aa0" stroke-width="2.4" stroke-linejoin="round"/>
<path d="M582.6 37.4H587.2V40.4Q587.2 41.4 586.2 41.8" fill="none" stroke="#2a62d8" stroke-width="1.5"/>
<path d="M580 33H591.4V40" fill="none" stroke="#5a92f0" stroke-width="0.7"/>
<path d="M601 37.9L605 34.8V36.8H610V34.8L614 37.9L610 41V39H605V41Z" fill="#2a6ae0" stroke="#1440a8" stroke-width="0.4"/><rect x="606.6" y="33.4" width="1.8" height="9" fill="#1c50c0"/>
<path d="M629.9 31.6L636.2 38H633V43.4H626.8V38H623.6Z" fill="url(#blu)" stroke="#0a2e90" stroke-width="0.6" stroke-linejoin="round"/>
<path d="M652 43.4L658.3 37H655.1V31.6H648.9V37H645.7Z" fill="url(#blu)" stroke="#0a2e90" stroke-width="0.6" stroke-linejoin="round"/>
<rect x="668.4" y="32.2" width="11.6" height="11.4" fill="none" stroke="#1a40d0" stroke-width="1.3" stroke-dasharray="1.6 1.2"/>
<rect x="668.6" y="38.6" width="5" height="5" fill="#e8eefc" stroke="#0e2a90" stroke-width="1.5"/>
<path d="M675 36.8L678.6 33.6" stroke="#3a7ae0" stroke-width="1.6"/>
<path d="M698.2 31.2L702.1 41.6L692.7 43.7L696.6 39L696 33.2Z" fill="#0808c4" stroke="#04042a" stroke-width="0.7" stroke-linejoin="round"/>
<path d="M689.2 34.2L692.3 31.6L697.8 37.3L694.8 39.9Z" fill="#4f8fe4" stroke="#1c3c8a" stroke-width="0.5"/>
<path d="M690.6 34.2L692.2 32.9L696.4 37.3L694.9 38.6Z" fill="#7ab0f0" fill-opacity="0.7"/>
<circle cx="697" cy="39.6" r="0.8" fill="#fff"/>
<path d="M712 35.9L716.2 32.3L719.3 35.3L724.4 32.7" stroke="#6e6e6e" stroke-width="2.6" fill="none" stroke-linejoin="round"/>
<path d="M712 35.9L716.2 32.3L719.3 35.3L724.4 32.7" stroke="#c4c4c4" stroke-width="1.2" fill="none" stroke-linejoin="round"/>
<path d="M712 42.9L716.5 39.7Q718.4 43.6 720.4 43.2Q722.6 42.8 724.4 40" stroke="#6e6e6e" stroke-width="2.6" fill="none"/>
<path d="M712 42.9L716.5 39.7Q718.4 43.6 720.4 43.2Q722.6 42.8 724.4 40" stroke="#c4c4c4" stroke-width="1.2" fill="none"/>
<path d="M715.6 37.5L720 37.7L717.9 40Z" fill="#1a3cd0" stroke="#0a1a70" stroke-width="0.4"/>
<path d="M733.6 42H747.2" stroke="#909090" stroke-width="1.5"/><circle cx="740.4" cy="42" r="1.7" fill="#2a6ae8" stroke="#1440a8" stroke-width="0.4"/>
<path d="M737.6 35.4H743.2M740.4 32.6V38.2" stroke="#1a40d0" stroke-width="1.7"/>
<path d="M755.6 41H769.2" stroke="#909090" stroke-width="1.5"/><circle cx="762.4" cy="41" r="1.7" fill="#2a6ae8" stroke="#1440a8" stroke-width="0.4"/>
<path d="M759.6 34.4H765.2" stroke="#1a40d0" stroke-width="1.7"/>
<path d="M791.4 36L793.4 38L791.4 40M794.6 36L796.6 38L794.6 40" stroke="#222" stroke-width="1.3" fill="none"/>
</svg>
<svg style="position:absolute;left:780px;top:50px" width="20" height="240" viewBox="780 50 20 240">
<defs><linearGradient id="gt" x1="0" y1="0" x2="0" y2="1"><stop offset="0" stop-color="#52c0a0"/><stop offset="1" stop-color="#0c8c68"/></linearGradient></defs>
<rect x="782.6" y="58.4" width="14.3" height="14.4" rx="2.6" fill="#f7f6f5" stroke="#cfcbc5" stroke-width="0.8"/>
<rect x="782.6" y="74.3" width="14.3" height="14.4" rx="2.6" fill="#f7f6f5" stroke="#cfcbc5" stroke-width="0.8"/>
<rect x="782.6" y="90.3" width="14.3" height="14.4" rx="2.6" fill="#f7f6f5" stroke="#cfcbc5" stroke-width="0.8"/>
<rect x="782.6" y="106.2" width="14.3" height="14.4" rx="2.6" fill="#f7f6f5" stroke="#cfcbc5" stroke-width="0.8"/>
<rect x="782.6" y="122.1" width="14.3" height="14.4" rx="2.6" fill="#f7f6f5" stroke="#cfcbc5" stroke-width="0.8"/>
<rect x="782.6" y="138.1" width="14.3" height="14.4" rx="2.6" fill="#f7f6f5" stroke="#cfcbc5" stroke-width="0.8"/>
<rect x="782.6" y="154.0" width="14.3" height="14.4" rx="2.6" fill="#f7f6f5" stroke="#cfcbc5" stroke-width="0.8"/>
<rect x="782.6" y="169.9" width="14.3" height="14.4" rx="2.6" fill="#f7f6f5" stroke="#cfcbc5" stroke-width="0.8"/>
<rect x="782.6" y="185.8" width="14.3" height="14.4" rx="2.6" fill="#dbd8d3" stroke="#cfcbc5" stroke-width="0.8"/>
<rect x="782.6" y="201.8" width="14.3" height="14.4" rx="2.6" fill="#f7f6f5" stroke="#cfcbc5" stroke-width="0.8"/>
<rect x="782.6" y="217.7" width="14.3" height="14.4" rx="2.6" fill="#f7f6f5" stroke="#cfcbc5" stroke-width="0.8"/>
<rect x="782.6" y="233.6" width="14.3" height="14.4" rx="2.6" fill="#f7f6f5" stroke="#cfcbc5" stroke-width="0.8"/>
<rect x="782.6" y="249.6" width="14.3" height="14.4" rx="2.6" fill="#f7f6f5" stroke="#cfcbc5" stroke-width="0.8"/>
<rect x="782.6" y="265.5" width="14.3" height="14.4" rx="2.6" fill="#f7f6f5" stroke="#cfcbc5" stroke-width="0.8"/>
<path d="M787.6 65.19999999999999V63.3A2.1 2.3 0 0 1 791.8000000000001 63.3V65.19999999999999" fill="none" stroke="#6aae98" stroke-width="1.3"/><rect x="786.2" y="64.8" width="7" height="5.2" rx="0.8" fill="url(#gt)" stroke="#086a4e" stroke-width="0.6"/><rect x="789.1" y="66.3" width="1.2" height="2" fill="#d0f0e4"/>
<path d="M785.7 85.5L793.7 77.5" stroke="#086a4e" stroke-width="1.6" stroke-linecap="round"/><ellipse cx="789.7" cy="81.5" rx="3.1" ry="2" transform="rotate(-45 789.7 81.5)" fill="#1a9a74" stroke="#086a4e" stroke-width="0.6"/>
<path d="M789.7 100.1V93.1" stroke="#0c8c68" stroke-width="2.5"/><path d="M784.7 100.9H794.7" stroke="#086a4e" stroke-width="2.5"/>
<path d="M787.8000000000001 109.80000000000001V117.0M791.6 109.80000000000001V117.0M786.1 111.5H793.3000000000001M786.1 115.30000000000001H793.3000000000001" stroke="#0c8c68" stroke-width="2.5" stroke-linecap="round"/><rect x="788.9000000000001" y="112.60000000000001" width="1.6" height="1.6" fill="#eaf8f2"/>
<path d="M786.7 126.30000000000001L792.7 132.3M792.7 126.30000000000001L786.7 132.3" stroke="#0c8c68" stroke-width="2.7" stroke-linecap="round"/>
<path d="M785.7 141.79999999999998L793.7 145.39999999999998M785.7 145.0L793.7 148.6" stroke="#0c8c68" stroke-width="2.1" stroke-linecap="round"/>
<path d="M787.3000000000001 163.6L793.5 157.39999999999998" stroke="#0c8c68" stroke-width="2" stroke-linecap="round"/><circle cx="787.1" cy="163.79999999999998" r="2.3" fill="#0c8c68" stroke="#086a4e" stroke-width="0.4"/>
<circle cx="789.7" cy="177.1" r="3.2" fill="#f4fbf8" stroke="#0c8c68" stroke-width="1.7"/><circle cx="789.7" cy="173.6" r="1.6" fill="#0c8c68"/><circle cx="789.7" cy="180.6" r="1.6" fill="#0c8c68"/><circle cx="786.2" cy="177.1" r="1.6" fill="#0c8c68"/><circle cx="793.2" cy="177.1" r="1.6" fill="#0c8c68"/>
<circle cx="789.7" cy="193.0" r="3.9" fill="#5ab69a" stroke="#086a4e" stroke-width="1.9"/><circle cx="789.7" cy="193.0" r="1.2" fill="#086a4e"/>
<path d="M786.1 209.0H793.3000000000001" stroke="#0c8c68" stroke-width="0.9"/><circle cx="786.2" cy="209.0" r="1.45" fill="#0c8c68"/><circle cx="789.7" cy="209.0" r="1.45" fill="#0c8c68"/><circle cx="793.2" cy="209.0" r="1.45" fill="#0c8c68"/>
<path d="M785.7 223.1L792.1 228.3" stroke="#086a4e" stroke-width="2.3" stroke-linecap="round"/><circle cx="792.5" cy="221.9" r="1.6" fill="#0c8c68"/>
<path d="M785.9000000000001 240.8H793.5M789.7 237.0V244.60000000000002" stroke="#0c8c68" stroke-width="2.5"/>
<path d="M786.5 260.40000000000003V256.6H790.3000000000001M788.7 253.8H793.5V257.6" fill="none" stroke="#0c8c68" stroke-width="1.6"/><rect x="788.1" y="257.6" width="3" height="2.8" fill="#086a4e"/><path d="M789.3000000000001 252.60000000000002h3" stroke="#6aae98" stroke-width="0.7"/>
<rect x="785.1" y="268.3" width="9" height="8.8" rx="0.8" fill="#12a27a" stroke="#086a4e" stroke-width="0.8"/><circle cx="788.1" cy="274.3" r="1" fill="none" stroke="#086a4e" stroke-width="0.5"/>
</svg>
<svg style="position:absolute;left:0;top:100px" width="60" height="110" viewBox="0 100 60 110">
<rect x="17.4" y="112.6" width="7.8" height="10.6" fill="#ededeb" stroke="#c9c9c6" stroke-width="0.5"/><path d="M19 121.6L19 117.4L20.4 116.2L23.4 116.8L23.4 120.8L21.8 122Z" fill="#1e2ab0"/><path d="M19.4 116.6L21.2 114.4L23.4 116.4L21.2 117.6Z" fill="#e02a20"/>
<path d="M29.6 127.19999999999999L31.2 125.69999999999999L36.9 125.69999999999999L36.9 131.79999999999998L35.3 133.5L29.6 133.5Z" fill="#1a1a8c" stroke="#0a0a50" stroke-width="0.5"/><path d="M30.3 127.8H34.6V132.79999999999998H30.3Z" fill="#4040d0"/>
<path d="M28.8 138.35L30.6 137.25L36.4 137.25L36.4 143.75L34.6 145.04999999999998L28.8 145.04999999999998Z" fill="#1a2ab4" stroke="#0c1470" stroke-width="0.5"/><path d="M28.8 138.35H31V145.04999999999998H28.8Z" fill="#3a86e4"/><path d="M28.3 145.25H34.8M28.5 145.25V140.85" stroke="#e8322a" stroke-width="0.8" fill="none"/><path d="M34.6 145.15L36.6 143.75L37.2 145.25Z" fill="#3a3a3a"/><path d="M32.6 137.75V141.85" stroke="#e8322a" stroke-width="0.5"/>
<path d="M28.8 150.1L30.6 149.0L36.4 149.0L36.4 155.5L34.6 156.79999999999998L28.8 156.79999999999998Z" fill="#1a2ab4" stroke="#0c1470" stroke-width="0.5"/><path d="M28.8 150.1H31V156.79999999999998H28.8Z" fill="#3a86e4"/><path d="M28.3 157.0H34.8M28.5 157.0V152.6" stroke="#e8322a" stroke-width="0.8" fill="none"/><path d="M34.6 156.9L36.6 155.5L37.2 157.0Z" fill="#3a3a3a"/><path d="M32.6 149.5V153.6" stroke="#e8322a" stroke-width="0.5"/>
<path d="M29.2 162.04999999999998V167.45A3.4 1.4 0 0 0 36 167.45V162.04999999999998Z" fill="#1a2ab4" stroke="#0c1470" stroke-width="0.4"/><ellipse cx="32.6" cy="162.04999999999998" rx="3.4" ry="1.3" fill="#4a8ae8" stroke="#e8322a" stroke-width="0.6"/><path d="M29.8 163.45V167.45" stroke="#4a96f0" stroke-width="1"/><path d="M36.2 162.85V167.85" stroke="#e8322a" stroke-width="0.7"/><path d="M34.6 168.85L36.8 168.75" stroke="#3a3a3a" stroke-width="0.8"/>
<rect x="28.8" y="176.0" width="5.2" height="4.8" fill="#fff" stroke="#3232e0" stroke-width="0.9"/><circle cx="33.9" cy="175.29999999999998" r="2.6" fill="#fff" fill-opacity="0.6" stroke="#3232e0" stroke-width="0.9"/>
<rect x="28.8" y="187.75" width="5.2" height="4.8" fill="#fff" stroke="#3232e0" stroke-width="0.9"/><circle cx="33.9" cy="187.04999999999998" r="2.6" fill="#fff" fill-opacity="0.6" stroke="#3232e0" stroke-width="0.9"/>
<rect x="28.8" y="199.5" width="5.2" height="4.8" fill="#fff" stroke="#3232e0" stroke-width="0.9"/><circle cx="33.9" cy="198.79999999999998" r="2.6" fill="#fff" fill-opacity="0.6" stroke="#3232e0" stroke-width="0.9"/>
</svg>
<div id="txt" style="left:0;top:0;width:800px;height:458px">
<span class="t" id="t0" style="left:1.7px;top:54.5px;font-size:9.2px;color:#3c3c3c;letter-spacing:-0.092px;">Combo View</span>
<span class="t" id="t1" style="left:5.0px;top:71.0px;font-size:9.2px;color:#3c3c3c;letter-spacing:0.254px;">Model</span>
<span class="t" id="t2" style="left:41.0px;top:71.5px;font-size:9.2px;color:#3c3c3c;letter-spacing:-0.377px;">Tasks</span>
<span class="t" id="t3" style="left:4.4px;top:88.8px;font-size:9.2px;color:#3c3c3c;letter-spacing:0.073px;">Labels &amp; Attributes</span>
<span class="t" id="t4" style="left:4.0px;top:102.6px;font-size:9.2px;color:#3c3c3c;letter-spacing:0.095px;">Application</span>
<span class="t" id="t5" style="left:30.0px;top:114.2px;font-size:9.2px;color:#2a2a2a;letter-spacing:-0.073px;font-weight:bold;">T13-ejemplo-ini</span>
<span class="t" id="t6" style="left:41.9px;top:126.0px;font-size:9.2px;color:#3c3c3c;letter-spacing:0.128px;">object</span>
<span class="t" id="t7" style="left:41.9px;top:137.8px;font-size:9.2px;color:#3c3c3c;letter-spacing:-0.117px;">Cube</span>
<span class="t" id="t8" style="left:41.9px;top:149.5px;font-size:9.2px;color:#3c3c3c;letter-spacing:-0.271px;">Cube001</span>
<span class="t" id="t9" style="left:41.9px;top:161.2px;font-size:9.2px;color:#3c3c3c;letter-spacing:-0.025px;">Cylinder</span>
<span class="t" id="t10" style="left:41.9px;top:173.0px;font-size:9.2px;color:#3c3c3c;letter-spacing:-0.294px;">Line</span>
<span class="t" id="t11" style="left:41.9px;top:184.8px;font-size:9.2px;color:#3c3c3c;letter-spacing:-0.186px;">Line001</span>
<span class="t" id="t12" style="left:41.9px;top:196.5px;font-size:9.2px;color:#2a2a2a;letter-spacing:-0.131px;font-weight:bold;">Line002</span>
<span class="t" id="t13" style="left:5.5px;top:255.2px;font-size:9.2px;color:#3c3c3c;letter-spacing:0.096px;">Property</span>
<span class="t" id="t14" style="left:67.2px;top:255.2px;font-size:9.2px;color:#3c3c3c;letter-spacing:-0.086px;">Value</span>
<span class="t" id="t15" style="left:17.6px;top:269.0px;font-size:9.2px;color:#ffffff;letter-spacing:-0.542px;font-weight:bold;">Base</span>
<span class="t" id="t16" style="left:17.6px;top:281.5px;font-size:9.2px;color:#3c3c3c;letter-spacing:0.101px;">Boundin...</span>
<span class="t" id="t17" style="left:66.6px;top:281.5px;font-size:9.2px;color:#3c3c3c;letter-spacing:-0.124px;">false</span>
<span class="t" id="t18" style="left:17.6px;top:293.8px;font-size:9.2px;color:#3c3c3c;letter-spacing:0.021px;">Deviation</span>
<span class="t" id="t19" style="left:66.6px;top:293.8px;font-size:9.2px;color:#3c3c3c;letter-spacing:-0.273px;">0,50</span>
<span class="t" id="t20" style="left:17.6px;top:306.1px;font-size:9.2px;color:#3c3c3c;letter-spacing:-0.031px;">Display ...</span>
<span class="t" id="t21" style="left:66.6px;top:306.1px;font-size:9.2px;color:#3c3c3c;letter-spacing:-0.144px;">Flat Lines</span>
<span class="t" id="t22" style="left:17.6px;top:318.5px;font-size:9.2px;color:#3c3c3c;letter-spacing:-0.112px;">Draw Style</span>
<span class="t" id="t23" style="left:66.6px;top:318.5px;font-size:9.2px;color:#3c3c3c;letter-spacing:-0.188px;">Solid</span>
<span class="t" id="t24" style="left:17.6px;top:330.8px;font-size:9.2px;color:#3c3c3c;letter-spacing:0.039px;">Lighting</span>
<span class="t" id="t25" style="left:66.6px;top:330.8px;font-size:9.2px;color:#3c3c3c;letter-spacing:-0.183px;">Two side</span>
<span class="t" id="t26" style="left:17.6px;top:343.1px;font-size:9.2px;color:#3c3c3c;letter-spacing:-0.139px;">Line Color</span>
<span class="t" id="t27" style="left:85.0px;top:343.1px;font-size:9.2px;color:#3c3c3c;letter-spacing:-0.128px;">[0, 0, 0]</span>
<span class="t" id="t28" style="left:17.6px;top:355.4px;font-size:9.2px;color:#3c3c3c;letter-spacing:0.008px;">Line Width</span>
<span class="t" id="t29" style="left:66.6px;top:355.4px;font-size:9.2px;color:#3c3c3c;letter-spacing:-0.273px;">2,00</span>
<span class="t" id="t30" style="left:17.6px;top:367.8px;font-size:9.2px;color:#3c3c3c;letter-spacing:-0.219px;">Point Co...</span>
<span class="t" id="t31" style="left:85.0px;top:367.8px;font-size:9.2px;color:#3c3c3c;letter-spacing:-0.128px;">[0, 0, 0]</span>
<span class="t" id="t32" style="left:17.6px;top:380.1px;font-size:9.2px;color:#3c3c3c;letter-spacing:-0.188px;">Point Size</span>
<span class="t" id="t33" style="left:66.6px;top:380.1px;font-size:9.2px;color:#3c3c3c;letter-spacing:-0.273px;">2,00</span>
<span class="t" id="t34" style="left:17.6px;top:392.4px;font-size:9.2px;color:#3c3c3c;letter-spacing:-0.091px;">Selectable</span>
<span class="t" id="t35" style="left:66.6px;top:392.4px;font-size:9.2px;color:#3c3c3c;letter-spacing:0.139px;">true</span>
<span class="t" id="t36" style="left:17.6px;top:404.8px;font-size:9.2px;color:#3c3c3c;letter-spacing:-0.312px;">Shape C...</span>
<span class="t" id="t37" style="left:85.0px;top:404.8px;font-size:9.2px;color:#3c3c3c;letter-spacing:-0.121px;">[204, 204, 204]</span>
<span class="t" id="t38" style="left:7.0px;top:424.4px;font-size:9.2px;color:#3c3c3c;letter-spacing:-0.188px;">View</span>
<span class="t" id="t39" style="left:37.0px;top:424.4px;font-size:9.2px;color:#3c3c3c;letter-spacing:-0.105px;">Data</span>
<span class="t" id="t40" style="left:183.8px;top:425.6px;font-size:9.2px;color:#3c3c3c;letter-spacing:-0.049px;">T13-ejemplo-ini : 1*</span>
<span class="t" id="t41" style="left:722.0px;top:445.4px;font-size:9.2px;color:#3c3c3c;letter-spacing:-0.215px;">109.88 x 65.84 mm</span>
<span class="t" id="t42" style="left:296.2px;top:8.0px;font-size:9.8px;color:#3c3c3c;letter-spacing:-0.207px;">Draft</span>
<span class="t" id="t43" style="left:8.0px;top:32.2px;font-size:10.2px;color:#3c3c3c;letter-spacing:-0.518px;">2875</span>
<span class="t" id="t44" style="left:124.5px;top:32.7px;font-size:10.2px;color:#3c3c3c;letter-spacing:-0.446px;">2px</span>
<span class="t" id="t45" style="left:156.1px;top:32.7px;font-size:10.2px;color:#3c3c3c;letter-spacing:-0.757px;">0,20</span>
</div>
</div></body></html>
